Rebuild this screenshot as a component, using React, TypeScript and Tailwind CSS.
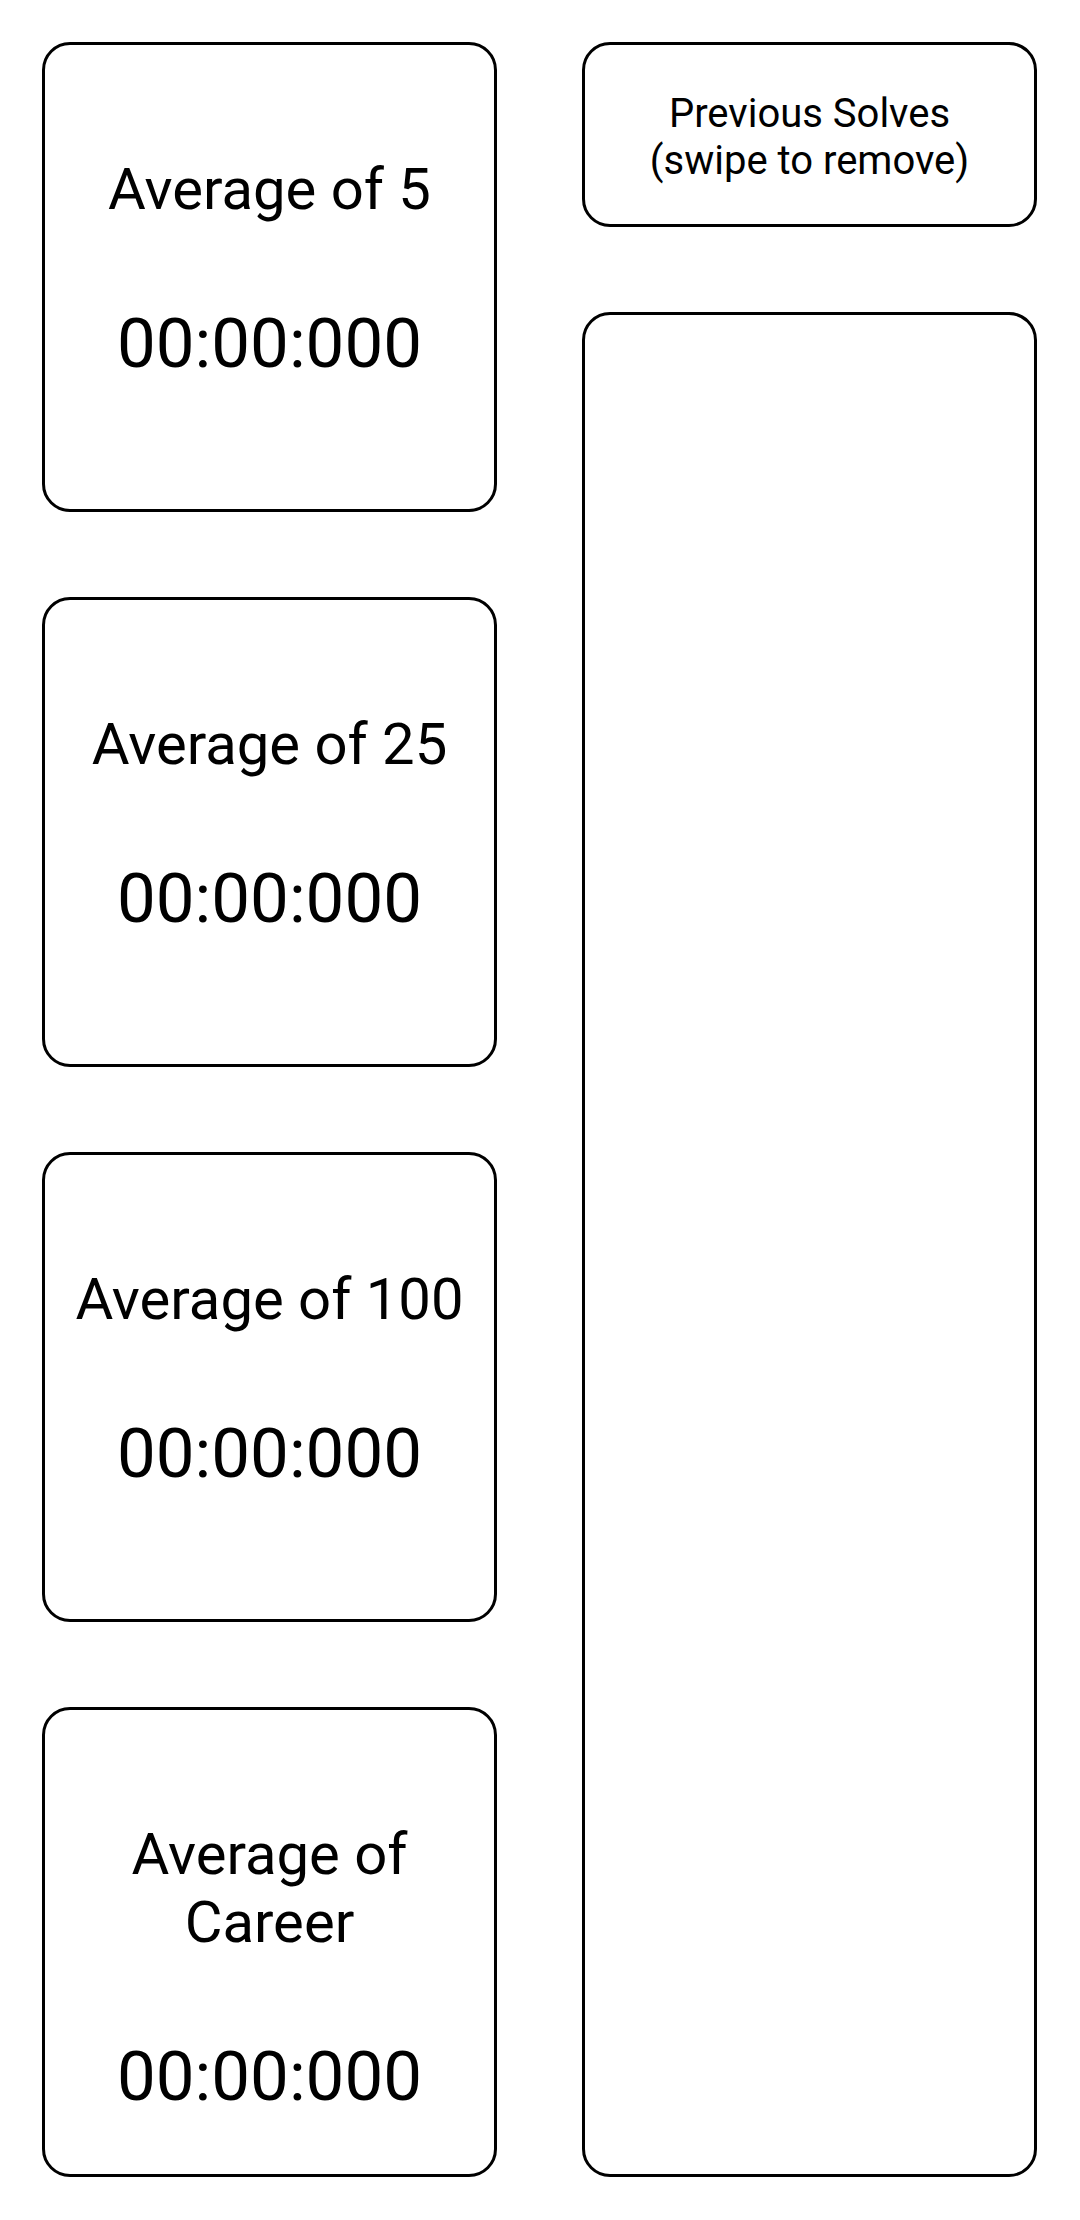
import React from "react";

type Stat = {
    label: string;
    time: string;
};

const stats: Stat[] = [
    { label: "Average of 5", time: "00:00:000" },
    { label: "Average of 25", time: "00:00:000" },
    { label: "Average of 100", time: "00:00:000" },
    { label: "Average of Career", time: "00:00:000" },
];

function StatCard({ label, time }: Stat) {
    return (
        <div className="h-[470px] border-[3px] border-black rounded-[28px] flex flex-col items-center text-center px-4 pt-[110px]">
            <div className="text-[58px] leading-[68px] text-black">{label}</div>
            <div className="mt-[80px] text-[69px] leading-[81px] text-black">{time}</div>
        </div>
    );
}

export default function App() {
    return (
        <div className="w-[1080px] h-[2220px] bg-white flex gap-[85px] pl-[42px] pt-[42px] font-['Roboto',sans-serif]">
            <div className="w-[455px] flex flex-col gap-[85px]">
                {stats.map((s) => (
                    <StatCard key={s.label} label={s.label} time={s.time} />
                ))}
            </div>
            <div className="w-[455px] flex flex-col gap-[85px]">
                <div className="h-[185px] border-[3px] border-black rounded-[28px] flex flex-col items-center justify-center text-center pt-[4px] text-[40px] leading-[47px] text-black">
                    <span>Previous Solves</span>
                    <span>(swipe to remove)</span>
                </div>
                <div className="h-[1865px] border-[3px] border-black rounded-[28px]"></div>
            </div>
        </div>
    );
}
